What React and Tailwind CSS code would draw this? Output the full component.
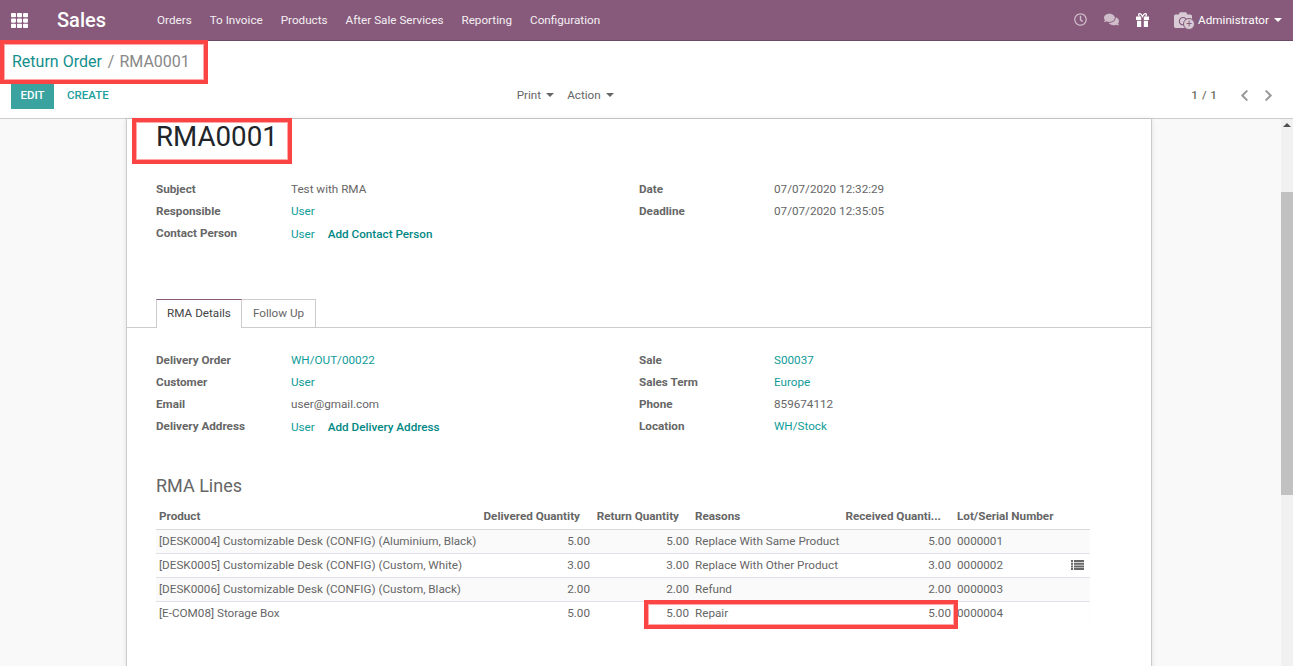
import React from "react";
import { FaTh, FaRegClock, FaComments, FaCamera, FaChevronLeft, FaChevronRight } from "react-icons/fa";

const menus = ["Orders", "To Invoice", "Products", "After Sale Services", "Reporting", "Configuration"];

const lines = [
  ["[DESK0004] Customizable Desk (CONFIG) (Aluminium, Black)", "5.00", "5.00", "Replace With Same Product", "5.00", "0000001"],
  ["[DESK0005] Customizable Desk (CONFIG) (Custom, White)", "3.00", "3.00", "Replace With Other Product", "3.00", "0000002"],
  ["[DESK0006] Customizable Desk (CONFIG) (Custom, Black)", "2.00", "2.00", "Refund", "2.00", "0000003"],
  ["[E-COM08] Storage Box", "5.00", "5.00", "Repair", "5.00", "0000004"],
];

const Caret = ({ className = "border-t-[#666]" }) => (
  <span className={`ml-[5px] inline-block h-0 w-0 border-x-[4px] border-t-[4px] border-x-transparent ${className}`} />
);

const Field = ({ label, children }) => (
  <div className="flex h-[22px] items-center">
    <div className="w-[135px] font-bold">{label}</div>
    <div className="flex items-center">{children}</div>
  </div>
);

const Link = ({ children }) => <span className="text-[#0f9c99]">{children}</span>;

const Highlight = ({ className }) => (
  <div className={`absolute border-[4px] border-[#fb4545] shadow-[inset_0_0_0_1px_#ffa9a9] ${className}`} />
);

const GiftIcon = () => (
  <svg className="ml-[17px] h-[14px] w-[13px]" viewBox="0 0 13 14" fill="none">
    <path d="M3.5 3.5C2 2 2.5 .5 4 .7c1.2.2 2 1.6 2.5 2.8C7 2.300 7.800.9 9 .7c1.500-.2 2 1.300.5 2.800" stroke="#fff" strokeWidth="1.200" />
    <path d="M0 3.500h5.200V7H0zM7.800 3.500H13V7H7.800zM1 7.800h4.200V14H1zM7.800 7.800H12V14H7.800z" fill="#fff" />
  </svg>
);

const ListIcon = () => (
  <svg className="ml-auto h-[10px] w-[13px]" viewBox="0 0 13 10" fill="#666">
    <path d="M0 0h2v2H0zM3 0h10v2H3zM0 2.700h2v2H0zM3 2.700h10v2H3zM0 5.400h2v2H0zM3 5.400h10v2H3zM0 8h2v2H0zM3 8h10v2H3z" />
  </svg>
);

export default function App() {
  return (
    <div className="relative flex h-[666px] flex-col overflow-hidden bg-white font-['Roboto',sans-serif] text-[11.7px] text-[#666]">
      <nav className="flex h-[41px] shrink-0 items-center border-b border-[#6f4a66] bg-[#875a7b] text-white">
        <FaTh className="ml-[11px] h-[17px] w-[17px]" />
        <span className="ml-[29px] text-[20px] font-medium">Sales</span>
        <div className="ml-[51px] flex gap-[18px] pt-px text-[#f4eff3]">
          {menus.map((m) => (
            <span key={m}>{m}</span>
          ))}
        </div>
        <div className="ml-auto flex items-center">
          <FaRegClock className="h-[13px] w-[13px] text-[#cfbdca]" />
          <FaComments className="ml-[17px] h-[15px] w-[15px] text-[#cfbdca]" />
          <GiftIcon />
          <span className="relative ml-[25px] inline-block h-[17px] w-[19px]">
            <FaCamera className="h-[18px] w-[18px] text-[#d8cbd5]" />
            <span className="absolute -bottom-[2px] -right-[2px] flex h-[12px] w-[12px] items-center justify-center rounded-full border border-[#875a7b] bg-[#d8cbd5] text-[10px] leading-none text-[#875a7b]">+</span>
          </span>
          <span className="ml-[5px] pt-px">Administrator</span>
          <Caret className="border-t-white" />
          <span className="w-[11px]" />
        </div>
      </nav>

      <div className="h-[78px] shrink-0 border-b border-[#ccc]">
        <div className="flex h-[41px] items-center pl-[12px] text-[16px]">
          <span className="text-[#138f8c]">Return Order</span>
          <span className="ml-[6px] mr-[5px] text-[#888]">/</span>
          <span className="text-[#888]">RMA0001</span>
        </div>
        <div className="relative flex h-[27px] items-center pl-[11px] font-medium">
          <span className="flex h-[27px] w-[43px] items-center justify-center bg-[#3aa29f] text-[11.5px] text-white">EDIT</span>
          <span className="ml-[13px] text-[11.5px] text-[#21a09d]">CREATE</span>
          <div className="ml-[408px] flex font-normal">
            <span className="flex items-center">Print<Caret /></span>
            <span className="ml-[13px] flex items-center">Action<Caret /></span>
          </div>
          <div className="ml-auto flex items-center pr-[18px]">
            <span className="text-[#6f6f5f] [word-spacing:1px]">1 / 1</span>
            <FaChevronLeft className="ml-[21px] h-[13px] w-[13px] text-[#999]" />
            <FaChevronRight className="ml-[11px] h-[13px] w-[13px] text-[#999]" />
          </div>
        </div>
      </div>

      <div className="flex min-h-0 flex-1">
        <div className="flex min-w-0 flex-1 justify-start bg-[#f9f9f9] pl-[126px]">
          <div className="h-[700px] w-[1026px] border-x border-[#ccc] bg-white pt-[1px] shadow-[0_0_5px_rgba(0,0,0,0.1)]">
            <h1 className="pl-[29px] text-[27.7px] leading-[34px] text-[#212529]">RMA0001</h1>

            <div className="mt-[25px] grid grid-cols-[483px_1fr] pl-[29px]">
              <div>
                <Field label="Subject">Test with RMA</Field>
                <Field label="Responsible"><Link>User</Link></Field>
                <Field label="Contact Person">
                  <span className="mt-[2px] flex items-center">
                    <Link>User</Link>
                    <span className="ml-[13px] font-medium text-[#008784]">Add Contact Person</span>
                  </span>
                </Field>
              </div>
              <div>
                <Field label="Date">07/07/2020 12:32:29</Field>
                <Field label="Deadline">07/07/2020 12:35:05</Field>
              </div>
            </div>

            <div className="mt-[54px] flex h-[29px] border-b border-[#ccc] pl-[29px]">
              <div className="h-[29px] w-[86px] border-x border-t border-[#ccc] border-t-[#875a7b] bg-white text-center leading-[27px] text-[#444]">RMA Details</div>
              <div className="h-[28px] w-[74px] border-r border-t border-[#ccc] text-center leading-[27px]">Follow Up</div>
            </div>

            <div className="mt-[22px] grid grid-cols-[483px_1fr] pl-[29px]">
              <div>
                <Field label="Delivery Order"><Link>WH/OUT/00022</Link></Field>
                <Field label="Customer"><Link>User</Link></Field>
                <Field label="Email">user@gmail.com</Field>
                <Field label="Delivery Address">
                  <span className="mt-[2px] flex items-center">
                    <Link>User</Link>
                    <span className="ml-[13px] font-medium text-[#008784]">Add Delivery Address</span>
                  </span>
                </Field>
              </div>
              <div>
                <Field label="Sale"><Link>S00037</Link></Field>
                <Field label="Sales Term"><Link>Europe</Link></Field>
                <Field label="Phone">859674112</Field>
                <Field label="Location"><Link>WH/Stock</Link></Field>
              </div>
            </div>

            <h2 className="mt-[36px] pl-[29px] text-[18px] leading-[24px]">RMA Lines</h2>

            <table className="ml-[29px] mt-[6px] w-[934px] table-fixed border-collapse">
              <colgroup>
                <col className="w-[325px]" />
                <col className="w-[112px]" />
                <col className="w-[99px]" />
                <col className="w-[152px]" />
                <col className="w-[110px]" />
                <col className="w-[106px]" />
                <col className="w-[30px]" />
              </colgroup>
              <thead>
                <tr className="h-[25px] font-bold">
                  <th className="px-[3px] pt-px text-left">Product</th>
                  <th className="whitespace-nowrap pr-[13px] pt-px text-right">Delivered Quantity</th>
                  <th className="whitespace-nowrap pr-[13px] pt-px text-right">Return Quantity</th>
                  <th className="px-[3px] pt-px text-left">Reasons</th>
                  <th className="whitespace-nowrap pr-[13px] pt-px text-right">Received Quanti...</th>
                  <th className="whitespace-nowrap px-[3px] pt-px text-left">Lot/Serial Number</th>
                  <th />
                </tr>
              </thead>
              <tbody className="border-t border-[#d9d9d9] shadow-[inset_0_2px_2px_rgba(0,0,0,0.05)]">
                {lines.map((l, i) => (
                  <tr key={l[0]} className={`h-[24px] ${i < 3 ? "border-b border-[#dee2e6]" : ""} ${i % 2 === 0 && i < 3 ? "bg-[#fafafa]" : ""}`}>
                    <td className="whitespace-nowrap px-[3px] pt-px">{l[0]}</td>
                    <td className="px-[3px] pt-px text-right">{l[1]}</td>
                    <td className="px-[3px] pt-px text-right">{l[2]}</td>
                    <td className="whitespace-nowrap px-[3px] pt-px">{l[3]}</td>
                    <td className="px-[3px] pt-px text-right">{l[4]}</td>
                    <td className="px-[3px] pt-px">{l[5]}</td>
                    <td className="pr-[6px] text-right">
                      {i === 1 && <ListIcon />}
                    </td>
                  </tr>
                ))}
              </tbody>
            </table>
          </div>
        </div>

        <div className="relative w-[12px] shrink-0 bg-[#f1f1f1]">
          <span className="absolute left-[2px] top-[4px] h-0 w-0 border-x-[4px] border-b-[4px] border-x-transparent border-b-[#505050]" />
          <div className="absolute left-0 top-[73px] h-[303px] w-[12px] bg-[#c1c1c1]" />
        </div>
      </div>

      <Highlight className="left-0 top-[40px] h-[44px] w-[208px]" />
      <Highlight className="left-[132px] top-[118px] h-[46px] w-[160px]" />
      <Highlight className="left-[644px] top-[600px] h-[29px] w-[314px]" />
    </div>
  );
}
